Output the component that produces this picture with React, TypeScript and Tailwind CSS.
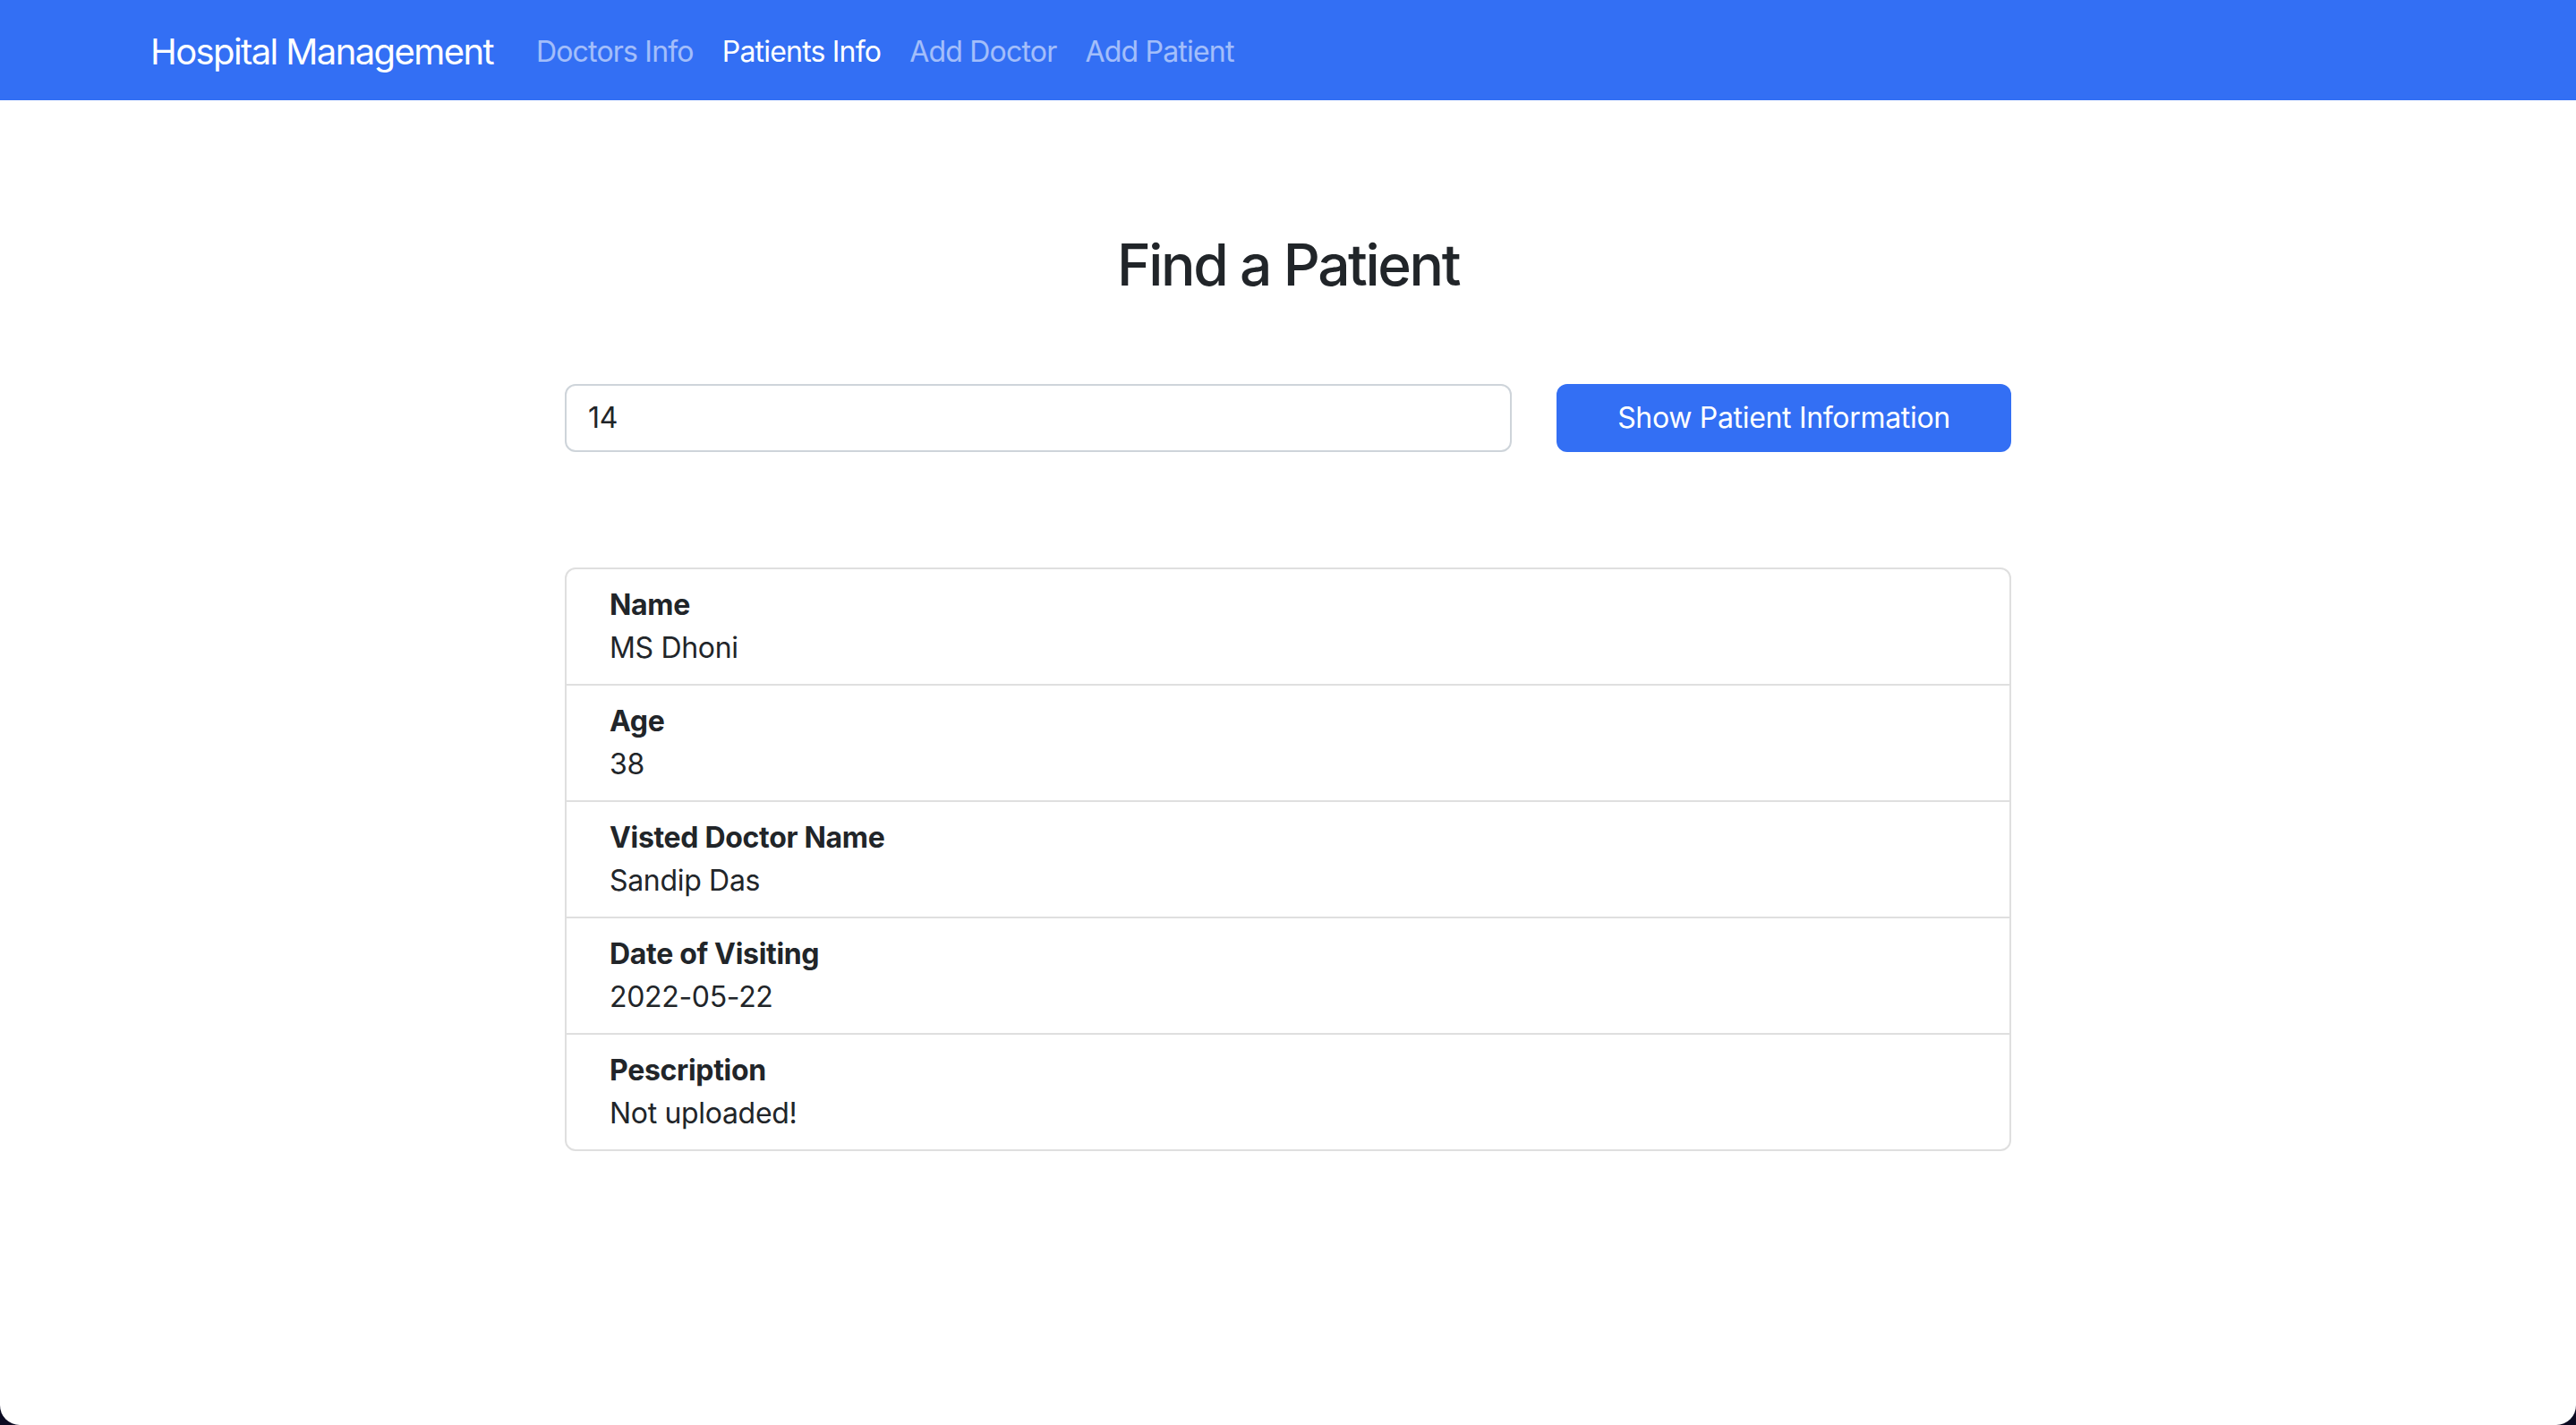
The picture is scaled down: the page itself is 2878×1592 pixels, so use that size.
const navLinks = [
  { label: 'Doctors Info', active: false },
  { label: 'Patients Info', active: true },
  { label: 'Add Doctor', active: false },
  { label: 'Add Patient', active: false },
];

const patient = [
  { label: 'Name', value: 'MS Dhoni' },
  { label: 'Age', value: '38' },
  { label: 'Visted Doctor Name', value: 'Sandip Das' },
  { label: 'Date of Visiting', value: '2022-05-22' },
  { label: 'Pescription', value: 'Not uploaded!' },
];

export default function App() {
  return (
    <div className="h-screen bg-[#0c0b22] font-['Inter',sans-serif] text-[#212529] tracking-[-0.02em]">
      <div className="h-full bg-white rounded-b-[22px] overflow-hidden">
        <nav className="h-[112px] bg-[#336ff4] flex items-center pl-[168px] pt-[3px]">
          <span className="text-[40px] leading-[60px] text-white mr-[32px] tracking-[-0.04em]">
            Hospital Management
          </span>
          <ul className="flex">
            {navLinks.map((l) => (
              <li key={l.label}>
                <a
                  href="#"
                  className={`block px-[16px] text-[32px] leading-[48px] tracking-[-0.025em] ${
                    l.active ? 'text-white' : 'text-white/55'
                  }`}
                >
                  {l.label}
                </a>
              </li>
            ))}
          </ul>
        </nav>

        <main className="w-[1616px] mx-auto">
          <h2 className="mt-[146px] text-center text-[64px] leading-[1.2] font-medium tracking-[-0.037em]">
            Find a Patient
          </h2>

          <div className="mt-[94px] flex gap-[50px]">
            <input
              defaultValue="14"
              className="flex-1 h-[76px] border-2 border-[#ced4da] rounded-[12px] px-[24px] text-[32px] outline-none"
            />
            <button className="w-[508px] h-[76px] rounded-[12px] bg-[#336ff4] text-white text-[32px]">
              Show Patient Information
            </button>
          </div>

          <ul className="mt-[129px] border-2 border-[#dfdfdf] rounded-[12px]">
            {patient.map((p, i) => (
              <li
                key={p.label}
                className={`px-[48px] py-[16px] text-[32px] leading-[48px] ${i > 0 ? 'border-t-2 border-[#dfdfdf]' : ''}`}
              >
                <div className="font-bold tracking-[-0.01em]">{p.label}</div>
                <div>{p.value}</div>
              </li>
            ))}
          </ul>
        </main>
      </div>
    </div>
  );
}
